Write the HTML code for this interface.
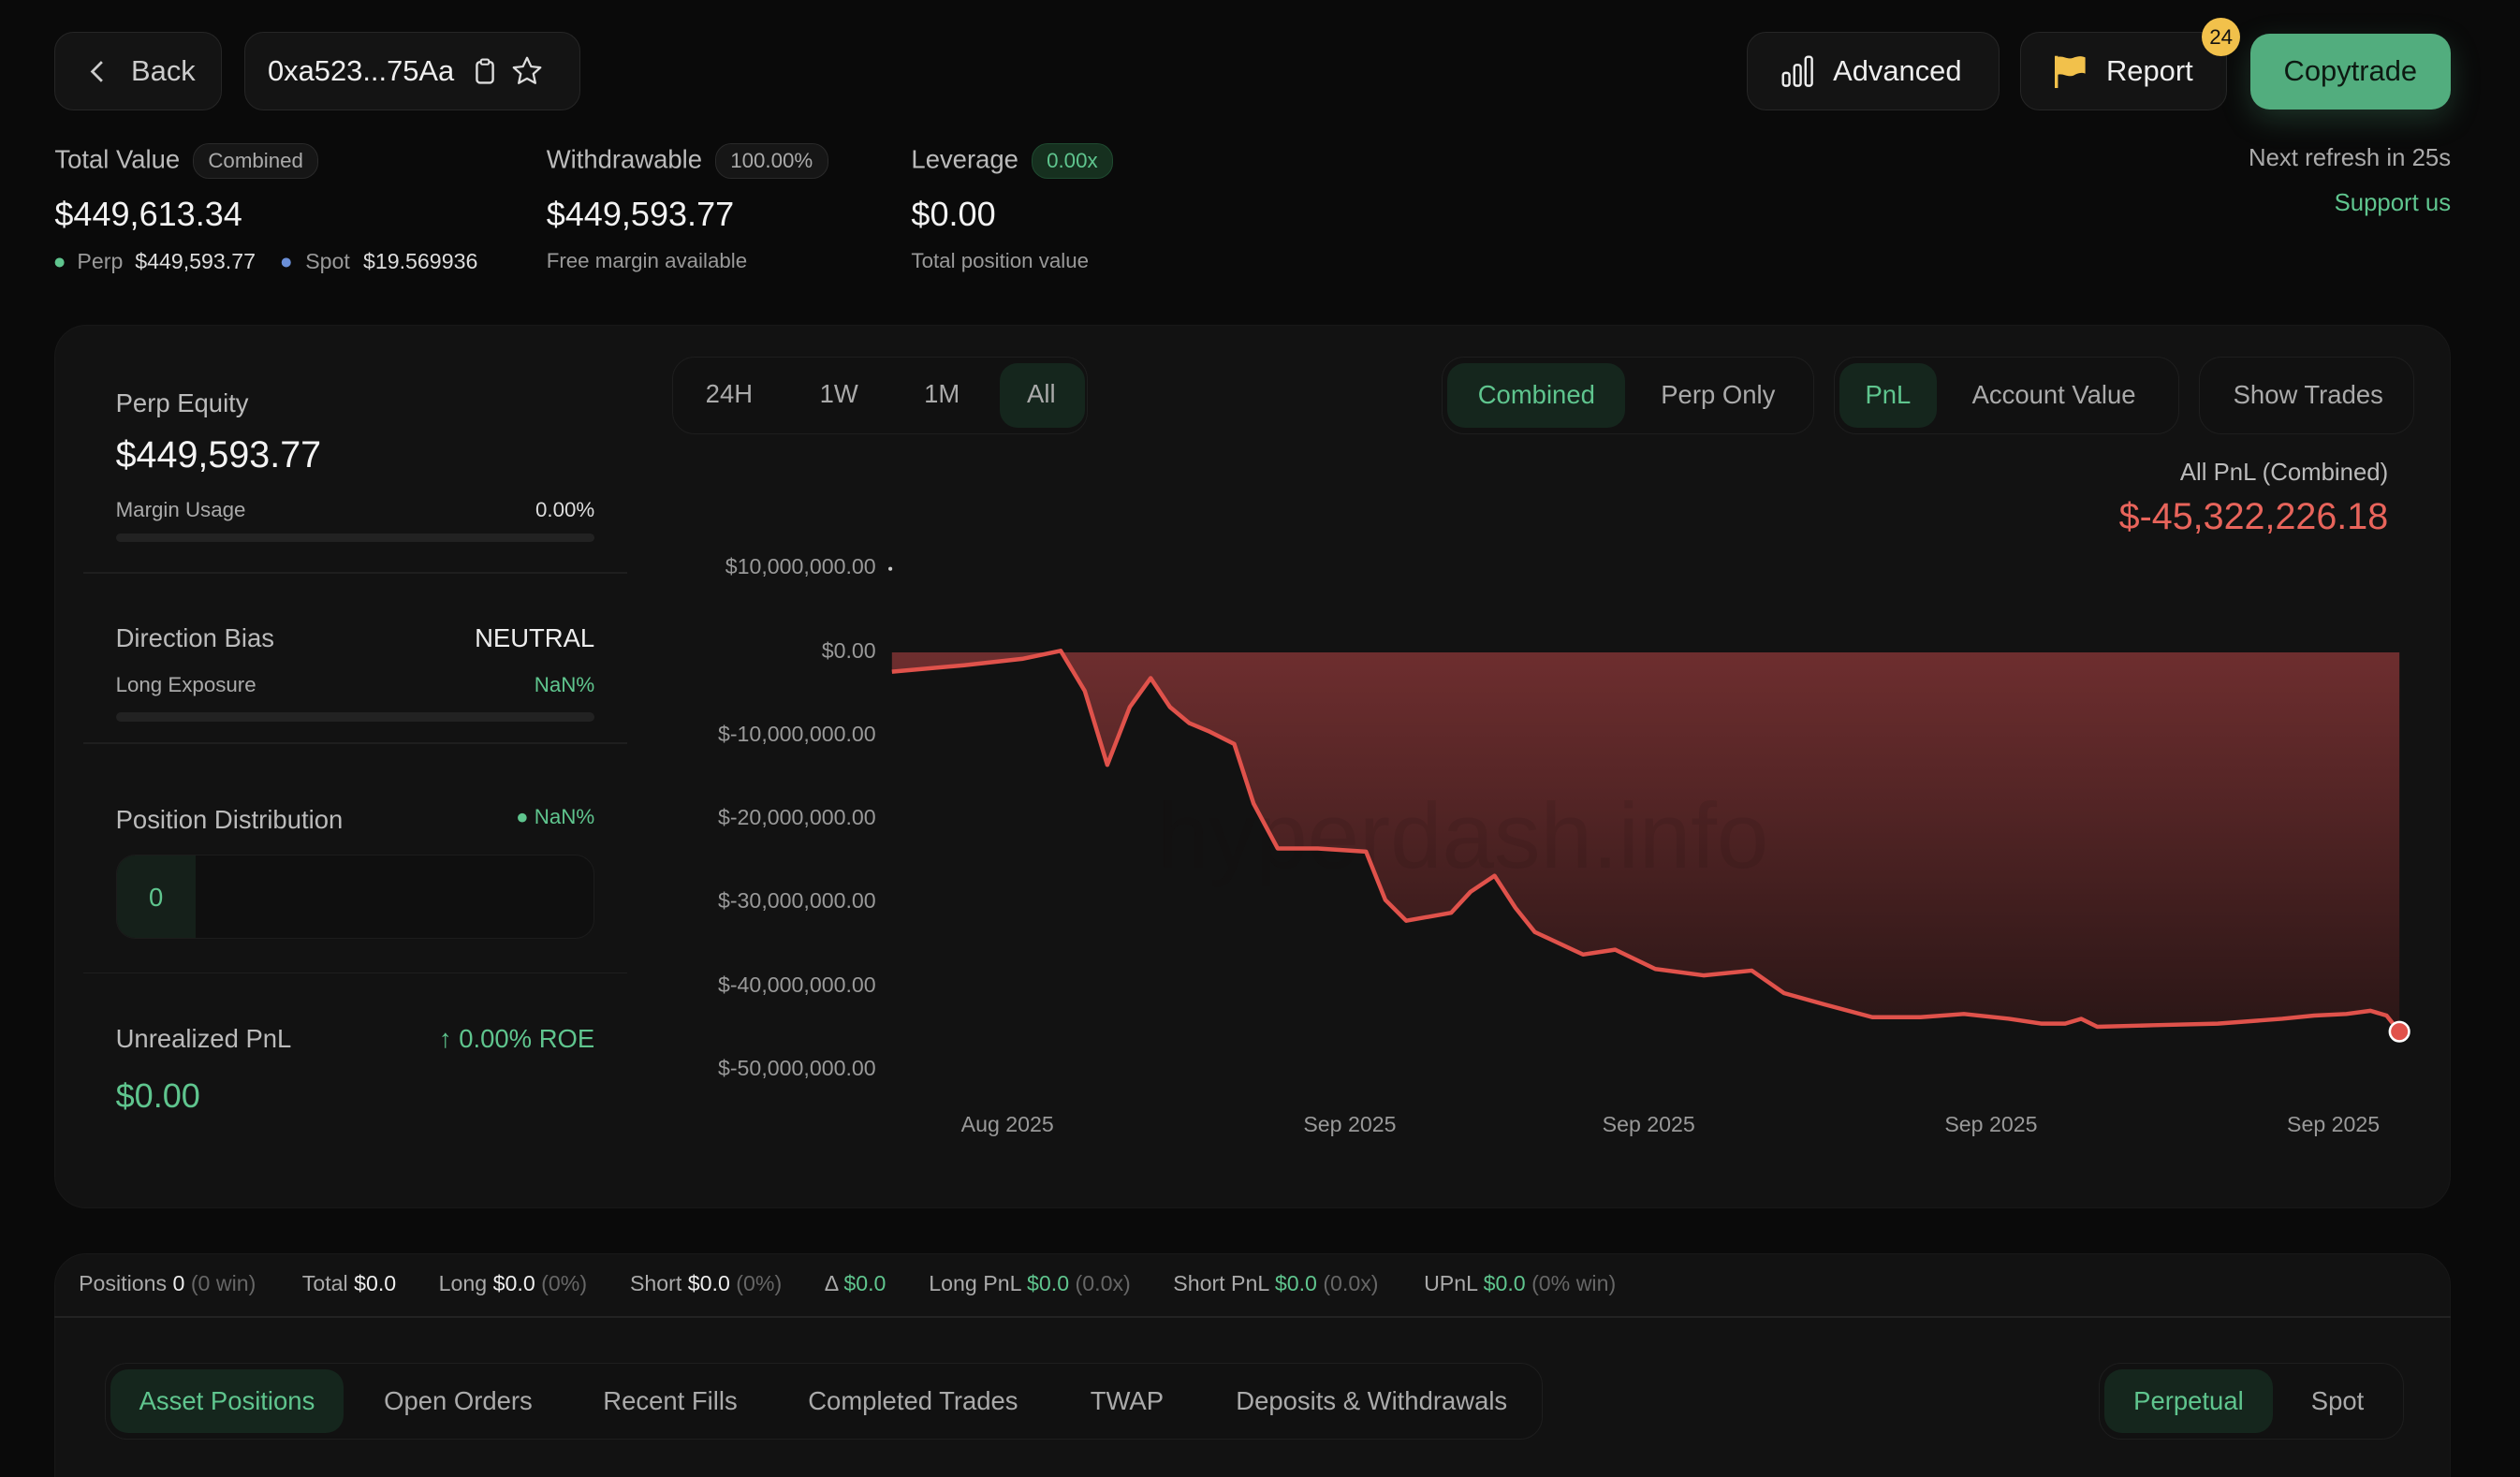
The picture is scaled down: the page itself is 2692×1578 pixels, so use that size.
<!DOCTYPE html>
<html><head><meta charset="utf-8"><style>
*{box-sizing:border-box;margin:0;padding:0}
html,body{background:#0a0a0a;width:2692px;height:1578px;overflow:hidden}
#root{zoom:1.7168;width:1568px;height:920px;position:relative;font-family:"Liberation Sans",sans-serif;color:#e8e8e8}
.abs{position:absolute}
.btn{position:absolute;border:1px solid #262626;background:#141414;border-radius:12px;display:flex;align-items:center;color:#eee;font-size:18px}
.pill{display:inline-block;border:1px solid #2a2a2a;background:#161616;border-radius:10px;font-size:13px;color:#aaa;padding:3px 9px;margin-left:8px;vertical-align:middle}
.lbl{font-size:16px;color:#bbb}
.big{font-size:21px;color:#f2f2f2}
.sm{font-size:13px;color:#999}
.g{color:#5fc58e}
.card{position:absolute;background:#121212;border-radius:20px;border:1px solid #181818}
.seg{position:absolute;height:48px;border:1px solid #1e1e1e;background:#111;border-radius:14px;display:flex;align-items:center;font-size:16px;color:#aaa}
.seg span{padding:0 18px;height:40px;line-height:40px;border-radius:11px}
.seg .on{background:#15261d;color:#5fc58e}
.bar{height:5px;background:#222;border-radius:3px}
.hr{position:absolute;left:52px;width:338px;height:1px;background:#1e1e1e}
.yl{position:absolute;right:1023px;font-size:13.5px;color:#999;text-align:right}
.xl{position:absolute;top:692px;font-size:13.5px;color:#999}
.st{position:absolute;top:791px;font-size:13.5px;color:#aaa;white-space:nowrap}
.st b{font-weight:normal;color:#eee}
.st i{font-style:normal;color:#666}
.tl{position:absolute;top:236px;font-size:16px;color:#aaa}
</style></head><body><div id="root">
<div class="btn" style="left:34px;top:20px;width:104px;height:49px;padding-left:18px">
<svg width="16" height="18" viewBox="0 0 16 18"><path d="M11 3 L5 9 L11 15" stroke="#ccc" stroke-width="1.6" fill="none"/></svg><span style="margin-left:13px;color:#ccc">Back</span></div>
<div class="btn" style="left:152px;top:20px;width:209px;height:49px;padding-left:14px">
<span>0xa523...75Aa</span>
<svg style="margin-left:12px" width="14" height="18" viewBox="0 0 14 18"><rect x="2" y="3" width="10" height="13" rx="2" stroke="#ddd" stroke-width="1.4" fill="none"/><rect x="4.5" y="1.5" width="5" height="3" rx="1" stroke="#ddd" stroke-width="1.2" fill="#141414"/></svg>
<svg style="margin-left:9px" width="21" height="21" viewBox="0 0 24 24"><path d="M12 2.5l2.9 6.2 6.6.7-5 4.5 1.4 6.6L12 17.2l-5.9 3.3 1.4-6.6-5-4.5 6.6-.7z" stroke="#ddd" stroke-width="1.5" fill="none" stroke-linejoin="round"/></svg></div>

<div class="btn" style="left:1087px;top:20px;width:157px;height:49px;padding-left:21px">
<svg width="21" height="20" viewBox="0 0 21 20"><rect x="1" y="11" width="4" height="8" rx="1.5" stroke="#eee" stroke-width="1.4" fill="none"/><rect x="8" y="6" width="4" height="13" rx="1.5" stroke="#eee" stroke-width="1.4" fill="none"/><rect x="15" y="1" width="4" height="18" rx="1.5" stroke="#eee" stroke-width="1.4" fill="none"/></svg><span style="margin-left:11px">Advanced</span></div>
<div class="btn" style="left:1257px;top:20px;width:129px;height:49px;padding-left:21px">
<svg width="20" height="22" viewBox="0 0 20 22"><path d="M1 1v20" stroke="#f2c14b" stroke-width="2"/><path d="M1 2c4-2 7 2 11 0 3-1 5-1 7 0v10c-3-1-5 0-7 1-4 2-7-2-11 0z" fill="#f2c14b"/></svg><span style="margin-left:12px">Report</span></div>
<div class="abs" style="left:1370px;top:11px;width:24px;height:24px;border-radius:12px;background:#f2c14b;color:#111;font-size:13px;text-align:center;line-height:24px">24</div>
<div class="abs" style="left:1400px;top:21px;width:125px;height:47px;border-radius:12px;background:#52ad7e;color:#0d1a12;font-size:18px;text-align:center;line-height:47px;box-shadow:0 6px 18px rgba(82,173,126,.25)">Copytrade</div>

<div class="abs" style="left:34px;top:89px"><span class="lbl">Total Value</span><span class="pill">Combined</span></div>
<div class="abs big" style="left:34px;top:121px">$449,613.34</div>
<div class="abs sm" style="left:33px;top:155px;font-size:13.5px"><span class="g">●</span></div>
<div class="abs sm" style="left:48px;top:155px;font-size:13.5px">Perp</div>
<div class="abs sm" style="left:84px;top:155px;font-size:13.5px;color:#ddd">$449,593.77</div>
<div class="abs sm" style="left:174px;top:155px;font-size:13.5px;color:#6a8fd8">●</div>
<div class="abs sm" style="left:190px;top:155px;font-size:13.5px">Spot</div>
<div class="abs sm" style="left:226px;top:155px;font-size:13.5px;color:#ddd">$19.569936</div>
<div class="abs" style="left:340px;top:89px"><span class="lbl">Withdrawable</span><span class="pill">100.00%</span></div>
<div class="abs big" style="left:340px;top:121px">$449,593.77</div>
<div class="abs sm" style="left:340px;top:155px">Free margin available</div>
<div class="abs" style="left:567px;top:89px"><span class="lbl">Leverage</span><span class="pill" style="background:#16301f;border-color:#1f4a30;color:#5fc58e">0.00x</span></div>
<div class="abs big" style="left:567px;top:121px">$0.00</div>
<div class="abs sm" style="left:567px;top:155px">Total position value</div>
<div class="abs" style="right:43px;top:90px;font-size:15px;color:#aaa">Next refresh in 25s</div>
<div class="abs g" style="right:43px;top:118px;font-size:15px">Support us</div>

<div class="card" style="left:34px;top:202px;width:1491px;height:550px"></div>
<div class="abs" style="left:72px;top:242px;font-size:16px;color:#bbb">Perp Equity</div>
<div class="abs" style="left:72px;top:270px;font-size:23px;color:#f4f4f4">$449,593.77</div>
<div class="abs" style="left:72px;top:310px;width:298px;font-size:13px;color:#aaa">Margin Usage<span style="float:right;color:#ddd">0.00%</span></div>
<div class="abs bar" style="left:72px;top:332px;width:298px"></div>
<div class="hr" style="top:356px"></div>
<div class="abs" style="left:72px;top:388px;width:298px;font-size:16px;color:#bbb">Direction Bias<span style="float:right;color:#eee">NEUTRAL</span></div>
<div class="abs" style="left:72px;top:419px;width:298px;font-size:13px;color:#aaa">Long Exposure<span style="float:right" class="g">NaN%</span></div>
<div class="abs bar" style="left:72px;top:443px;width:298px;height:6px"></div>
<div class="hr" style="top:462px"></div>
<div class="abs" style="left:72px;top:501px;width:298px;font-size:16px;color:#bbb">Position Distribution<span style="float:right;font-size:13px" class="g">● NaN%</span></div>
<div class="abs" style="left:72px;top:532px;width:298px;height:52px;border:1px solid #1c1c1c;border-radius:12px;background:#0f0f0f;overflow:hidden"><div style="width:49px;height:100%;background:#15201a;color:#5fc58e;text-align:center;line-height:52px;font-size:16px">0</div></div>
<div class="hr" style="top:605px"></div>
<div class="abs" style="left:72px;top:637px;width:298px;font-size:16px;color:#bbb">Unrealized PnL<span style="float:right" class="g">↑ 0.00% ROE</span></div>
<div class="abs g" style="left:72px;top:670px;font-size:21px">$0.00</div>

<div class="seg" style="left:418px;top:222px;width:259px"></div>
<div class="abs" style="left:622px;top:226px;width:53px;height:40px;border-radius:11px;background:#15261d"></div>
<div class="tl" style="left:439px">24H</div><div class="tl" style="left:510px">1W</div><div class="tl" style="left:575px">1M</div><div class="tl g" style="left:639px">All</div>
<div class="seg" style="left:897px;top:222px;width:232px;padding-left:3px"><span class="on" style="padding:0 19px">Combined</span><span style="padding:0 0 0 22px">Perp Only</span></div>
<div class="seg" style="left:1141px;top:222px;width:215px;padding-left:3px"><span class="on" style="padding:0 16px">PnL</span><span style="padding:0 0 0 22px">Account Value</span></div>
<div class="seg" style="left:1368px;top:222px;width:134px;padding-left:3px"><span>Show Trades</span></div>
<div class="abs" style="right:82px;top:286px;font-size:15px;color:#bbb">All PnL (Combined)</div>
<div class="abs" style="right:82px;top:309px;font-size:23px;color:#e8645b">$-45,322,226.18</div>

<div class="yl" style="top:345px">$10,000,000.00</div>
<div class="yl" style="top:397px">$0.00</div>
<div class="yl" style="top:449px">$-10,000,000.00</div>
<div class="yl" style="top:501px">$-20,000,000.00</div>
<div class="yl" style="top:553px">$-30,000,000.00</div>
<div class="yl" style="top:605px">$-40,000,000.00</div>
<div class="yl" style="top:657px">$-50,000,000.00</div>
<div class="xl" style="left:598px">Aug 2025</div><div class="xl" style="left:811px">Sep 2025</div><div class="xl" style="left:997px">Sep 2025</div><div class="xl" style="left:1210px">Sep 2025</div><div class="xl" style="left:1423px">Sep 2025</div>
<svg class="abs" style="left:0;top:0" width="1568" height="919">
<defs><linearGradient id="gr" x1="0" y1="0" x2="0" y2="1"><stop offset="0" stop-color="#6e2e2f"/><stop offset="1" stop-color="#2a1616"/></linearGradient></defs>
<path d="M555,406 L555,418 L600,414 L636,410 L660,405 L675,430 L689,476 L703,440 L716,422 L728,440 L740,450 L752,455 L768,463 L780,500 L795,528 L820,528 L850,530 L862,560 L875,573 L903,568 L915,555 L930,545 L943,565 L955,580 L985,594 L1005,591 L1030,603 L1060,607 L1090,604 L1110,618 L1135,625 L1165,633 L1195,633 L1222,631 L1250,634 L1270,637 L1285,637 L1295,634 L1305,639 L1340,638 L1380,637 L1420,634 L1440,632 L1460,631 L1475,629 L1485,632 L1493,642 L1493,406 Z" fill="url(#gr)"/>
<text x="720" y="540" font-family="Liberation Sans, sans-serif" font-size="58" fill="rgba(20,10,10,0.10)">hyperdash.info</text>
<path d="M555,418 L600,414 L636,410 L660,405 L675,430 L689,476 L703,440 L716,422 L728,440 L740,450 L752,455 L768,463 L780,500 L795,528 L820,528 L850,530 L862,560 L875,573 L903,568 L915,555 L930,545 L943,565 L955,580 L985,594 L1005,591 L1030,603 L1060,607 L1090,604 L1110,618 L1135,625 L1165,633 L1195,633 L1222,631 L1250,634 L1270,637 L1285,637 L1295,634 L1305,639 L1340,638 L1380,637 L1420,634 L1440,632 L1460,631 L1475,629 L1485,632 L1493,642" stroke="#e0524b" stroke-width="2.6" fill="none" stroke-linejoin="round"/>
<circle cx="1493" cy="642" r="6" fill="#e0524b" stroke="#fff" stroke-width="1.5"/>
<circle cx="554" cy="354" r="1.2" fill="#ccc"/>
</svg>

<div class="card" style="left:34px;top:780px;width:1491px;height:160px;border-radius:20px 20px 0 0"></div>
<div class="abs" style="left:34px;top:819px;width:1491px;height:1px;background:#222"></div>
<div class="st" style="left:49px">Positions <b>0</b> <i>(0 win)</i></div>
<div class="st" style="left:188px">Total <b>$0.0</b></div>
<div class="st" style="left:273px">Long <b>$0.0</b> <i>(0%)</i></div>
<div class="st" style="left:392px">Short <b>$0.0</b> <i>(0%)</i></div>
<div class="st" style="left:513px">Δ <span class="g">$0.0</span></div>
<div class="st" style="left:578px">Long PnL <span class="g">$0.0</span> <i>(0.0x)</i></div>
<div class="st" style="left:730px">Short PnL <span class="g">$0.0</span> <i>(0.0x)</i></div>
<div class="st" style="left:886px">UPnL <span class="g">$0.0</span> <i>(0% win)</i></div>
<div class="seg" style="left:65px;top:848px;width:895px;padding-left:3px;gap:0"><span class="on">Asset Positions</span><span style="margin-left:7px">Open Orders</span><span style="margin-left:8px">Recent Fills</span><span style="margin-left:8px">Completed Trades</span><span style="margin-left:9px">TWAP</span><span style="margin-left:9px">Deposits &amp; Withdrawals</span></div>
<div class="seg" style="left:1306px;top:848px;width:190px;padding-left:3px"><span class="on">Perpetual</span><span style="padding-left:24px">Spot</span></div>
</div></body></html>
